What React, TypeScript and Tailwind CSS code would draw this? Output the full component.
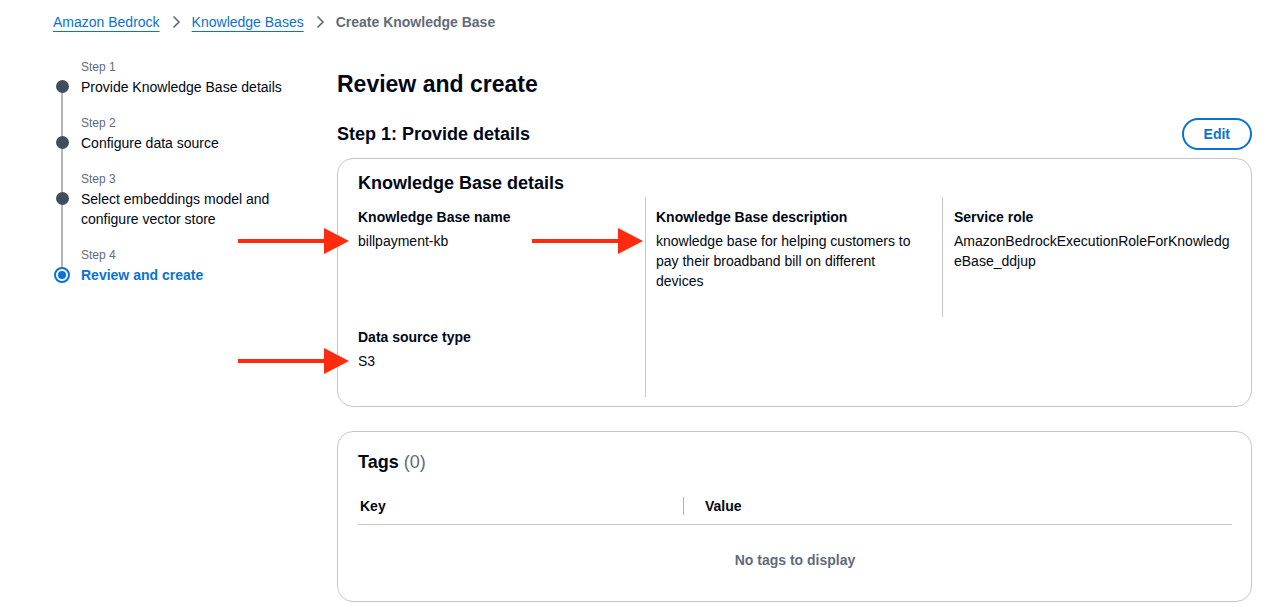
import React from "react";

const FONT = { fontFamily: '"Liberation Sans", Arial, sans-serif' };

function Chevron() {
  return (
    <svg width="16" height="16" viewBox="0 0 16 16" className="mx-[8px]">
      <path d="M5.5 2.5 L11 8 L5.5 13.5" fill="none" stroke="#5f6b7a" strokeWidth="1.6" />
    </svg>
  );
}

function Arrow({ left, top, width }: { left: number; top: number; width: number }) {
  const head = 25;
  return (
    <svg
      width={width}
      height={28}
      viewBox={`0 0 ${width} 28`}
      className="absolute"
      style={{ left, top }}
    >
      <rect x="0" y="12" width={width - head + 2} height="4" fill="#ff2b0e" />
      <polygon points={`${width - head},1 ${width},14 ${width - head},27`} fill="#ff2b0e" />
    </svg>
  );
}

type Step = { label: string; title: string[]; active?: boolean };
const steps: Step[] = [
  { label: "Step 1", title: ["Provide Knowledge Base details"] },
  { label: "Step 2", title: ["Configure data source"] },
  { label: "Step 3", title: ["Select embeddings model and", "configure vector store"] },
  { label: "Step 4", title: ["Review and create"], active: true },
];

function StepItem({ step, first, last }: { step: Step; first: boolean; last: boolean }) {
  return (
    <div className="flex">
      <div className="w-[16px] flex flex-col items-center mr-[11px]">
        <div className={`w-[2px] h-[21px] ${first ? "" : "bg-[#b4b4bb]"}`} />
        {step.active ? (
          <svg width="16" height="16" viewBox="0 0 16 16" className="shrink-0 -mt-[1px]">
            <circle cx="8" cy="8" r="7" fill="none" stroke="#0972d3" strokeWidth="2" />
            <circle cx="8" cy="8" r="4" fill="#0972d3" />
          </svg>
        ) : (
          <div className="w-[13px] h-[13px] rounded-full bg-[#414d5c] shrink-0" />
        )}
        {!last && <div className="w-[2px] flex-1 bg-[#b4b4bb]" />}
      </div>
      <div className={`flex flex-col ${last ? "" : "pb-[18px]"}`}>
        <div className="text-[12px] leading-[16px] text-[#5f6b7a] mb-[2px]">{step.label}</div>
        <div
          className={`text-[14px] leading-[20px] ${
            step.active ? "font-bold text-[#0972d3]" : "text-[#000716]"
          }`}
        >
          {step.title.map((t) => (
            <div key={t}>{t}</div>
          ))}
        </div>
      </div>
    </div>
  );
}

function Field({ label, value }: { label: string; value: string }) {
  return (
    <div>
      <div className="text-[14px] leading-[20px] font-bold text-[#000716] mb-[4px]">{label}</div>
      <div className="text-[14px] leading-[20px] text-[#000716] break-all">{value}</div>
    </div>
  );
}

export default function App() {
  return (
    <div className="relative w-[1273px] h-[616px] bg-white overflow-hidden text-[#000716]" style={FONT}>
      {/* Breadcrumb */}
      <div className="flex items-center pl-[53px] pt-[12px] text-[14px] leading-[20px]">
        <a className="text-[#0972d3] underline decoration-1 underline-offset-[4px]">Amazon Bedrock</a>
        <Chevron />
        <a className="text-[#0972d3] underline decoration-1 underline-offset-[4px]">Knowledge Bases</a>
        <Chevron />
        <span className="font-bold text-[#5f6b7a]">Create Knowledge Base</span>
      </div>

      <div className="flex pt-[27px]">
        {/* Side navigation */}
        <div className="w-[337px] pl-[54px] shrink-0">
          {steps.map((s, i) => (
            <StepItem key={s.label} step={s} first={i === 0} last={i === steps.length - 1} />
          ))}
        </div>

        {/* Main */}
        <div className="w-[915px] pt-[10px]">
          <h1 className="text-[23px] leading-[30px] font-bold">Review and create</h1>

          <div className="flex items-center justify-between mt-[19px] h-[32px]">
            <h2 className="text-[18px] leading-[22px] font-bold">Step 1: Provide details</h2>
            <button className="h-[32px] px-[20px] rounded-full border-2 border-[#0972d3] text-[#0972d3] font-bold text-[14px] leading-[20px]">
              Edit
            </button>
          </div>

          {/* Card 1 */}
          <div className="mt-[8px] border border-[#c6c6cd] rounded-[16px] pt-[13px] pb-[9px] pl-[20px] pr-[19px]">
            <h3 className="text-[18px] leading-[22px] font-bold">Knowledge Base details</h3>
            <div className="mt-[3px] grid grid-cols-[287px_297px_1fr]">
              <div className="pt-[10px] pb-[26px] pr-[10px]">
                <Field label="Knowledge Base name" value="billpayment-kb" />
              </div>
              <div className="pt-[10px] pb-[26px] pl-[10px] pr-[24px] border-l border-[#c6c6cd]">
                <div className="text-[14px] leading-[20px] font-bold mb-[4px]">Knowledge Base description</div>
                <div className="text-[14px] leading-[20px]">
                  knowledge base for helping customers to pay their broadband bill on different devices
                </div>
              </div>
              <div className="pt-[10px] pb-[26px] pl-[11px] border-l border-[#c6c6cd]">
                <Field label="Service role" value="AmazonBedrockExecutionRoleForKnowledgeBase_ddjup" />
              </div>
              <div className="pt-[10px] pb-[26px] pr-[10px]">
                <Field label="Data source type" value="S3" />
              </div>
              <div className="border-l border-[#c6c6cd]" />
            </div>
          </div>

          {/* Card 2 */}
          <div className="mt-[24px] border border-[#c6c6cd] rounded-[16px] pt-[19px] pb-[31px] pl-[20px] pr-[19px]">
            <h3 className="text-[18px] leading-[22px]">
              <span className="font-bold">Tags</span>{" "}
              <span className="text-[#5f6b7a]">(0)</span>
            </h3>
            <div className="mt-[15px] flex items-center pt-[8px] pb-[8px] border-b border-[#c6c6cd] text-[14px] leading-[20px] font-bold">
              <div className="w-[325px] pl-[2px]">Key</div>
              <div className="w-[1px] h-[18px] bg-[#b4b4bb]" />
              <div className="pl-[21px]">Value</div>
            </div>
            <div className="pt-[25px] text-center text-[14px] leading-[20px] font-bold text-[#5f6b7a]">
              No tags to display
            </div>
          </div>
        </div>
      </div>

      {/* Annotation arrows */}
      <Arrow left={238} top={227} width={111} />
      <Arrow left={532} top={227} width={111} />
      <Arrow left={238} top={347} width={111} />
    </div>
  );
}
